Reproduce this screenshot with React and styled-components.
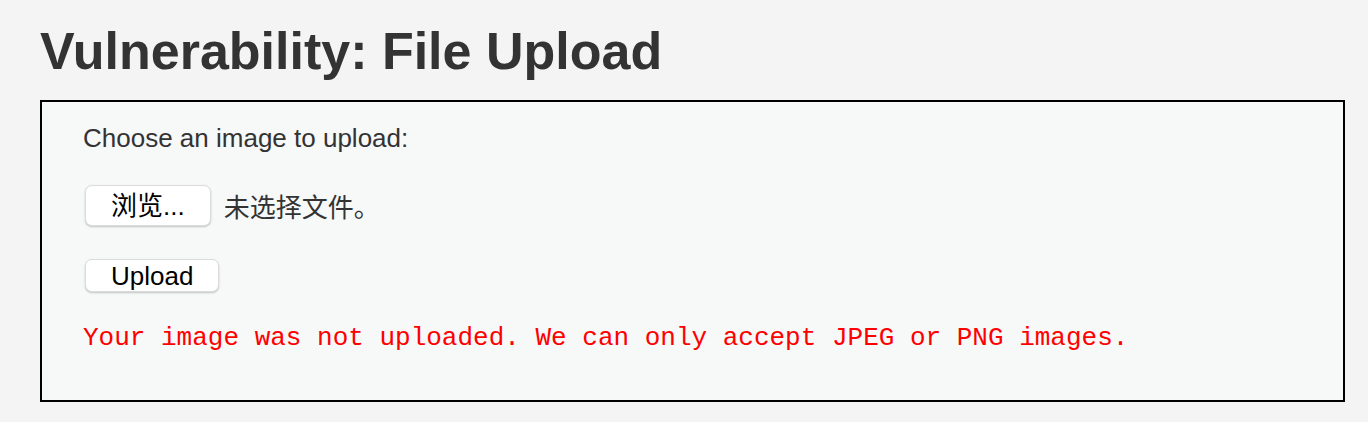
import React from "react";
import styled, { createGlobalStyle } from "styled-components";

const GlobalStyle = createGlobalStyle`
  body {
    margin: 0;
    background: #f4f4f4;
    font-family: "Liberation Sans", Arial, "Noto Sans CJK SC", sans-serif;
    color: #333;
  }
`;

const Page = styled.div`
  padding: 21px 23px 20px 40px;
`;

const Title = styled.h1`
  margin: 0 0 19px;
  font-size: 52px;
  font-weight: bold;
  line-height: normal;
  color: #333;
`;

const CodeArea = styled.div`
  border: 2px solid #000;
  background: #f7f8f8;
  padding: 21px 41px 47px;
`;

const Form = styled.form`
  display: flex;
  flex-direction: column;
  align-items: flex-start;
`;

const Label = styled.div`
  font-size: 26px;
  line-height: normal;
  color: #333;
`;

const Row = styled.div`
  display: flex;
  align-items: center;
  gap: 13px;
  margin-top: ${(p) => p.$top}px;
`;

const Button = styled.button`
  height: ${(p) => p.$h}px;
  padding: 0 25px;
  margin: 0 0 0 2px;
  background: #fff;
  border: 1px solid #dcdcdc;
  border-radius: 7px;
  box-shadow: 0 1px 2px rgba(0, 0, 0, 0.22);
  font-family: "Liberation Sans", Arial, "Noto Sans CJK SC", sans-serif;
  font-size: 26px;
  color: #000;
  line-height: 1;
`;

const FileName = styled.span`
  font-family: "Liberation Sans", "Noto Sans CJK SC", sans-serif;
  font-size: 26px;
  color: #333;
`;

const Error = styled.pre`
  margin: 31px 0 0;
  font-family: "Liberation Mono", "Courier New", monospace;
  font-size: 26px;
  line-height: normal;
  color: #ff0000;
`;

export default function App() {
  return (
    <>
      <GlobalStyle />
      <Page>
        <Title>Vulnerability: File Upload</Title>
        <CodeArea>
          <Form onSubmit={(e) => e.preventDefault()}>
            <Label>Choose an image to upload:</Label>
            <Row $top={31}>
              <Button type="button" $h={41}>浏览...</Button>
              <FileName>未选择文件。</FileName>
            </Row>
            <Row $top={33}>
              <Button type="submit" $h={33}>Upload</Button>
            </Row>
          </Form>
          <Error>Your image was not uploaded. We can only accept JPEG or PNG images.</Error>
        </CodeArea>
      </Page>
    </>
  );
}
